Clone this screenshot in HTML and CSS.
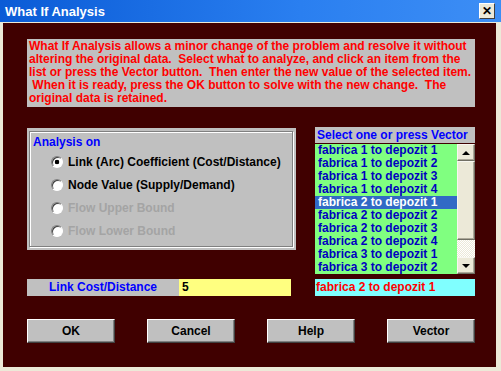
FILE: index.html
```html
<!DOCTYPE html>
<html lang="en">
<head>
    <meta charset="UTF-8">
    <title>What If Analysis</title>
    <link rel="stylesheet" href="styles.css">
</head>
<body>
    <div class="window">
        <div class="titlebar">
            <span class="title">What If Analysis</span>
            <span class="close">&#x2715;</span>
        </div>
        <div class="client">
            <p class="intro">What If Analysis allows a minor change of the problem and resolve it without
altering the original data.  Select what to analyze, and click an item from the
list or press the Vector button.  Then enter the new value of the selected item.
 When it is ready, press the OK button to solve with the new change.  The
original data is retained.</p>

            <div class="main">
                <div class="group">
                    <div class="frame">
                        <div class="caption">Analysis on</div>
                        <div class="radio"><span class="dot checked"></span>Link (Arc) Coefficient (Cost/Distance)</div>
                        <div class="radio"><span class="dot"></span>Node Value (Supply/Demand)</div>
                        <div class="radio disabled"><span class="dot"></span>Flow Upper Bound</div>
                        <div class="radio disabled"><span class="dot"></span>Flow Lower Bound</div>
                    </div>
                </div>

                <div class="picker">
                    <div class="picker-head">Select one or press Vector</div>
                    <div class="list">
                        <ul class="items">
                            <li>fabrica 1 to depozit 1</li>
                            <li>fabrica 1 to depozit 2</li>
                            <li>fabrica 1 to depozit 3</li>
                            <li>fabrica 1 to depozit 4</li>
                            <li class="selected">fabrica 2 to depozit 1</li>
                            <li>fabrica 2 to depozit 2</li>
                            <li>fabrica 2 to depozit 3</li>
                            <li>fabrica 2 to depozit 4</li>
                            <li>fabrica 3 to depozit 1</li>
                            <li>fabrica 3 to depozit 2</li>
                        </ul>
                        <div class="scrollbar">
                            <div class="sb-btn"><span class="arrow up"></span></div>
                            <div class="sb-thumb"></div>
                            <div class="sb-track"></div>
                            <div class="sb-btn"><span class="arrow down"></span></div>
                        </div>
                    </div>
                </div>

                <div class="value-row">
                    <span class="value-label">Link Cost/Distance</span>
                    <span class="value-input">5</span>
                </div>
                <div class="current">fabrica 2 to depozit 1</div>
            </div>

            <div class="buttons">
                <button>OK</button>
                <button>Cancel</button>
                <button>Help</button>
                <button>Vector</button>
            </div>
        </div>
    </div>
</body>
</html>
```

FILE: styles.css
```css
body {
    margin: 0;
    font-family: "Liberation Sans", Arial, sans-serif;
    background: #ece9d8;
}
.window {
    width: 501px;
    height: 371px;
    background: #ece9d8;
    display: flex;
    flex-direction: column;
    overflow: hidden;
}
.titlebar {
    height: 22px;
    border-bottom: 1px solid #ece9d8;
    background: linear-gradient(to right, #0a5bd6, #2a7ff0 60%, #3d8ef5);
    display: flex;
    align-items: center;
    justify-content: space-between;
    padding: 0 6px 0 5px;
}
.title {
    color: #fff;
    font-weight: bold;
    font-size: 13px;
}
.close {
    width: 14px;
    height: 14px;
    background: #ece9d8;
    border: 1px solid;
    border-color: #fff #404040 #404040 #fff;
    font-size: 12px;
    font-weight: bold;
    line-height: 14px;
    text-align: center;
    color: #000;
}
.client {
    flex: 1;
    margin: 0 5px 4px 3px;
    background: #400000;
    padding: 16px 0 0 24px;
}
.intro {
    margin: 0;
    width: 444px;
    height: 67px;
    padding: 1px 2px 0;
    background: #c0c0c0;
    color: #ff0000;
    font-size: 12px;
    font-weight: bold;
    line-height: 13px;
    white-space: pre;
    overflow: hidden;
}
.main {
    margin-top: 20px;
    display: grid;
    grid-template-columns: 269px 160px;
    column-gap: 19px;
    row-gap: 5px;
}
.group {
    margin-top: 1px;
    height: 122px;
    box-sizing: border-box;
    padding: 3px 3px 3px 2px;
    background: #c0c0c0;
    align-self: start;
}
.frame {
    height: 100%;
    box-sizing: border-box;
    border: 1px solid #808080;
    box-shadow: inset 1px 1px #fff, 1px 1px #fff;
    padding-left: 21px;
}
.caption {
    display: inline-block;
    margin: -3px 0 0 -19px;
    padding: 0 1px;
    background: #c0c0c0;
    color: #0000ff;
    font-size: 12px;
    font-weight: bold;
    line-height: 13px;
}
.radio {
    display: flex;
    align-items: center;
    gap: 5px;
    height: 23px;
    font-size: 12px;
    font-weight: bold;
    color: #000;
}
.radio.disabled {
    color: #a4a4a4;
}
.dot {
    width: 10px;
    height: 10px;
    border-radius: 50%;
    border: 1px solid;
    border-color: #808080 #fff #fff #808080;
    box-shadow: inset 1px 1px #404040;
    background: #fff;
}
.dot.checked {
    background: radial-gradient(circle, #000 2px, #fff 2.6px);
}
.picker-head {
    height: 16px;
    background: #c0c0c0;
    color: #0000ff;
    font-size: 12px;
    font-weight: bold;
    line-height: 16px;
    padding-left: 2px;
}
.list {
    margin-top: 1px;
    height: 130px;
    display: flex;
    background: #80ff80;
}
.items {
    flex: 1;
    margin: 0;
    padding: 0;
    list-style: none;
}
.items li {
    height: 13px;
    line-height: 13px;
    padding-left: 3px;
    font-size: 12px;
    font-weight: bold;
    color: #0000c0;
}
.items li.selected {
    background: #316ac5;
    color: #fff;
}
.scrollbar {
    width: 18px;
    display: flex;
    flex-direction: column;
}
.sb-btn, .sb-thumb {
    box-sizing: border-box;
    background: #ece9d8;
    border: 1px solid;
    border-color: #f8f7f0 #716f64 #716f64 #f8f7f0;
    box-shadow: inset -1px -1px #aca899;
}
.sb-btn {
    height: 17px;
    display: flex;
    align-items: center;
    justify-content: center;
}
.sb-thumb {
    height: 79px;
}
.sb-track {
    flex: 1;
    background: repeating-conic-gradient(#fff 0 25%, #ece9d8 0 50%) 0 0 / 2px 2px;
}
.arrow {
    width: 0;
    height: 0;
    border-left: 4px solid transparent;
    border-right: 4px solid transparent;
}
.arrow.up {
    border-bottom: 4px solid #000;
}
.arrow.down {
    border-top: 4px solid #000;
}
.value-row {
    display: flex;
    height: 17px;
}
.value-label {
    width: 152px;
    background: #c0c0c0;
    color: #0000ff;
    font-size: 12px;
    font-weight: bold;
    line-height: 17px;
    text-align: center;
}
.value-input {
    width: 109px;
    background: #ffff80;
    padding-left: 3px;
    font-size: 12px;
    font-weight: bold;
    line-height: 17px;
}
.current {
    height: 17px;
    background: #80ffff;
    color: #ff0000;
    font-size: 12px;
    font-weight: bold;
    line-height: 17px;
    padding-left: 1px;
}
.buttons {
    margin-top: 23px;
    display: flex;
    gap: 32px;
}
button {
    width: 88px;
    height: 24px;
    padding: 0;
    background: #c0c0c0;
    border: 1px solid;
    border-color: #fff #404040 #404040 #fff;
    box-shadow: inset -1px -1px #808080;
    font-family: "Liberation Sans", Arial, sans-serif;
    font-size: 12px;
    font-weight: bold;
    color: #000;
}
```
